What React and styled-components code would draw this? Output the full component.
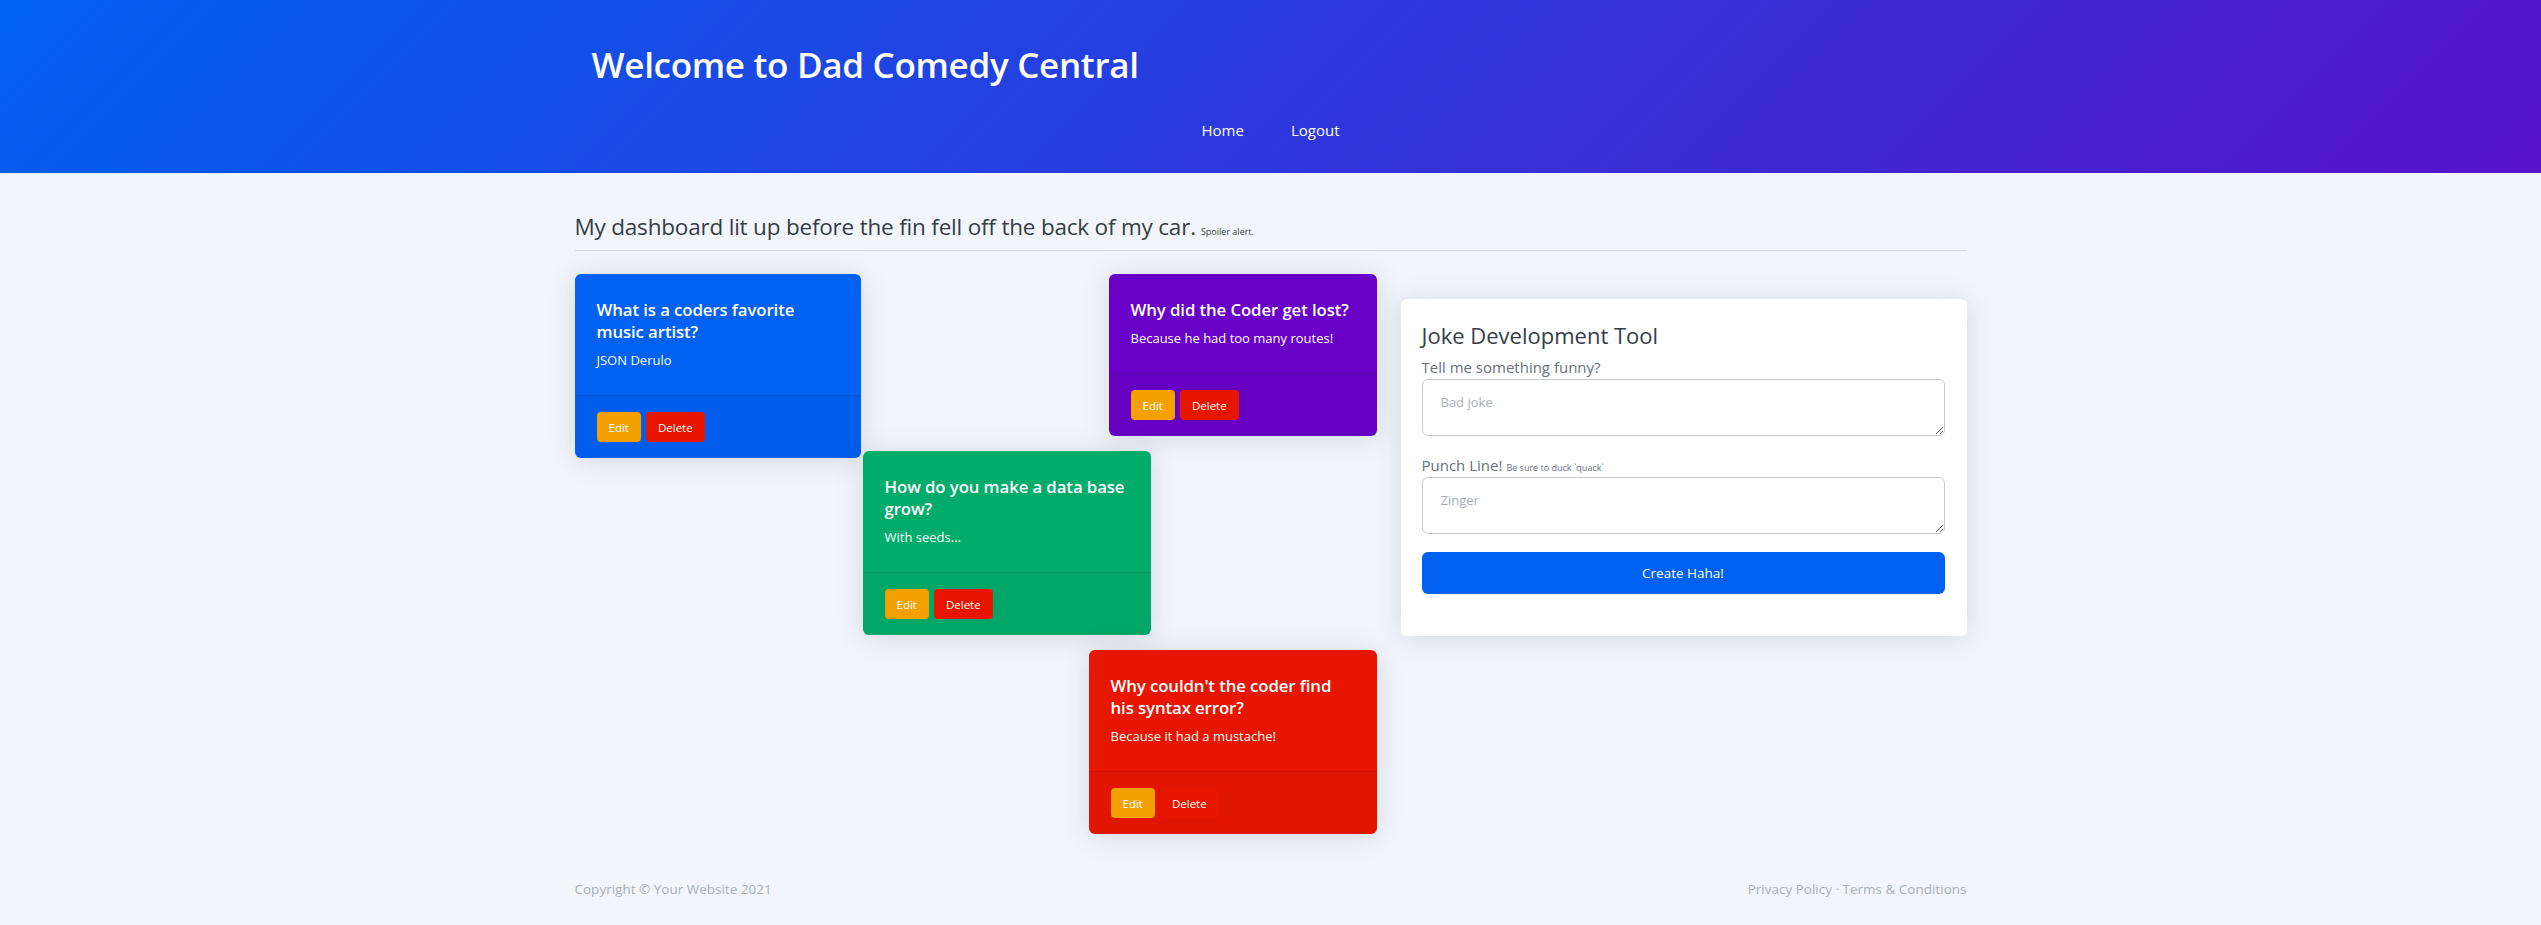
import styled, { createGlobalStyle } from 'styled-components';

const GlobalStyle = createGlobalStyle`
  body {
    margin: 0;
    background: #f2f6fc;
    font-family: "Open Sans", "Liberation Sans", sans-serif;
    color: #69707a;
  }
  * { box-sizing: border-box; }
`;

const Header = styled.header`
  height: 173px;
  background: linear-gradient(135deg, #0061f2 0%, #5712c8 100%);
  color: white;
`;

const HeaderInner = styled.div`
  width: 1392px;
  margin: 0 auto;
  padding-top: 44px;
`;

const SiteTitle = styled.h1`
  margin: 0 0 0 17px;
  font-size: 35px;
  font-weight: 600;
  line-height: 42px;
  letter-spacing: -0.3px;
`;

const Nav = styled.nav`
  display: flex;
  justify-content: center;
  gap: 47px;
  margin-top: 34px;
`;

const NavLink = styled.a`
  color: white;
  font-size: 15px;
  line-height: 20px;
  text-decoration: none;
  cursor: pointer;
`;

const Main = styled.main`
  width: 1392px;
  margin: 0 auto;
  padding-top: 40px;
`;

const PageHeading = styled.h4`
  margin: 0;
  font-size: 22.5px;
  font-weight: 500;
  color: #363d47;
  line-height: 28px;
  letter-spacing: -0.2px;
`;

const Small = styled.small`
  font-size: 9px;
  font-weight: 400;
  line-height: 1;
  color: #363d47;
  margin-left: 5px;
  letter-spacing: 0;
`;

const Divider = styled.hr`
  margin: 9px 0 23px;
  border: 0;
  border-top: 1px solid #d4d8df;
`;

const Row = styled.div`
  display: flex;
  align-items: flex-start;
`;

const Board = styled.div`
  position: relative;
  width: 826px;
  height: 561px;
  flex-shrink: 0;
`;

const JokeCard = styled.div`
  position: absolute;
  left: ${({ x }) => x}px;
  top: ${({ y }) => y}px;
  width: ${({ w }) => w}px;
  background: ${({ bg }) => bg};
  border-radius: 6px;
  color: white;
  box-shadow: 0 2px 28px 0 rgba(33, 40, 50, 0.15);
  overflow: hidden;
`;

const CardBody = styled.div`
  padding: 25px 18px 24px 22px;
`;

const CardTitle = styled.h5`
  margin: 0 0 7px;
  font-size: 16.8px;
  font-weight: 600;
  line-height: 22px;
  letter-spacing: -0.1px;
`;

const CardText = styled.p`
  margin: 0;
  font-size: 13px;
  line-height: 21px;
`;

const CardFooter = styled.div`
  display: flex;
  gap: 5px;
  padding: 16px 22px;
  background: rgba(33, 40, 50, 0.03);
  border-top: 1px solid rgba(33, 40, 50, 0.125);
`;

const SmallButton = styled.button`
  height: 30px;
  padding: 0 12px;
  border: none;
  border-radius: 4px;
  background: ${({ bg }) => bg};
  color: white;
  font-family: inherit;
  font-size: 11.5px;
  cursor: pointer;
`;

const FormCard = styled.div`
  width: 566px;
  margin-top: 25px;
  background: white;
  border-radius: 6px;
  box-shadow: 0 2px 28px 0 rgba(33, 40, 50, 0.15);
  padding: 22px 22px 42px 21px;
`;

const FormTitle = styled.h3`
  margin: 0;
  font-size: 22px;
  font-weight: 500;
  color: #363d47;
  line-height: 28px;
`;

const Label = styled.label`
  display: block;
  font-size: 15px;
  line-height: 22px;
  color: #69707a;
  margin-bottom: 1px;
`;

const Hint = styled.span`
  font-size: 9px;
  line-height: 1;
  margin-left: 4px;
`;

const FormGroup = styled.div`
  margin-top: ${({ top }) => top}px;
`;

const TextArea = styled.textarea`
  display: block;
  width: 100%;
  height: 57px;
  padding: 13px 18px;
  border: 1px solid #c5ccd6;
  border-radius: 6px;
  font-family: inherit;
  font-size: 13px;
  color: #69707a;
  resize: vertical;

  &::placeholder {
    color: #a7aeb8;
  }
`;

const SubmitButton = styled.button`
  display: block;
  width: 100%;
  height: 42px;
  margin-top: 18px;
  border: none;
  border-radius: 6px;
  background: #0061f2;
  color: white;
  font-family: inherit;
  font-size: 13.5px;
  cursor: pointer;
`;

const Footer = styled.footer`
  width: 1392px;
  margin: 0 auto;
  display: flex;
  justify-content: space-between;
  padding: 44px 0 27px;
  font-size: 13.5px;
  line-height: 20px;
  color: #a7aeb8;
`;

const jokes = [
  {
    title: 'What is a coders favorite music artist?',
    punch: 'JSON Derulo',
    bg: '#0061f2',
    x: 0, y: 0, w: 286,
  },
  {
    title: 'Why did the Coder get lost?',
    punch: 'Because he had too many routes!',
    bg: '#6900c7',
    x: 534, y: 0, w: 268,
  },
  {
    title: 'How do you make a data base grow?',
    punch: 'With seeds...',
    bg: '#00ac69',
    x: 288, y: 177, w: 288,
  },
  {
    title: "Why couldn't the coder find his syntax error?",
    punch: 'Because it had a mustache!',
    bg: '#e81500',
    x: 514, y: 376, w: 288,
  },
];

const App = () => {
  return (
    <>
      <GlobalStyle />
      <Header>
        <HeaderInner>
          <SiteTitle>Welcome to Dad Comedy Central</SiteTitle>
          <Nav>
            <NavLink>Home</NavLink>
            <NavLink>Logout</NavLink>
          </Nav>
        </HeaderInner>
      </Header>

      <Main>
        <PageHeading>
          My dashboard lit up before the fin fell off the back of my car.
          <Small>Spoiler alert.</Small>
        </PageHeading>
        <Divider />

        <Row>
          <Board>
            {jokes.map((joke) => (
              <JokeCard key={joke.title} x={joke.x} y={joke.y} w={joke.w} bg={joke.bg}>
                <CardBody>
                  <CardTitle>{joke.title}</CardTitle>
                  <CardText>{joke.punch}</CardText>
                </CardBody>
                <CardFooter>
                  <SmallButton bg="#f4a100">Edit</SmallButton>
                  <SmallButton bg="#e81500">Delete</SmallButton>
                </CardFooter>
              </JokeCard>
            ))}
          </Board>

          <FormCard>
            <FormTitle>Joke Development Tool</FormTitle>
            <form onSubmit={(e) => e.preventDefault()}>
              <FormGroup top={7}>
                <Label>Tell me something funny?</Label>
                <TextArea placeholder="Bad joke" />
              </FormGroup>
              <FormGroup top={18}>
                <Label>
                  Punch Line!<Hint>Be sure to duck `quack`</Hint>
                </Label>
                <TextArea placeholder="Zinger" />
              </FormGroup>
              <SubmitButton type="submit">Create Haha!</SubmitButton>
            </form>
          </FormCard>
        </Row>
      </Main>

      <Footer>
        <span>Copyright © Your Website 2021</span>
        <span>Privacy Policy · Terms &amp; Conditions</span>
      </Footer>
    </>
  );
};

export default App;
